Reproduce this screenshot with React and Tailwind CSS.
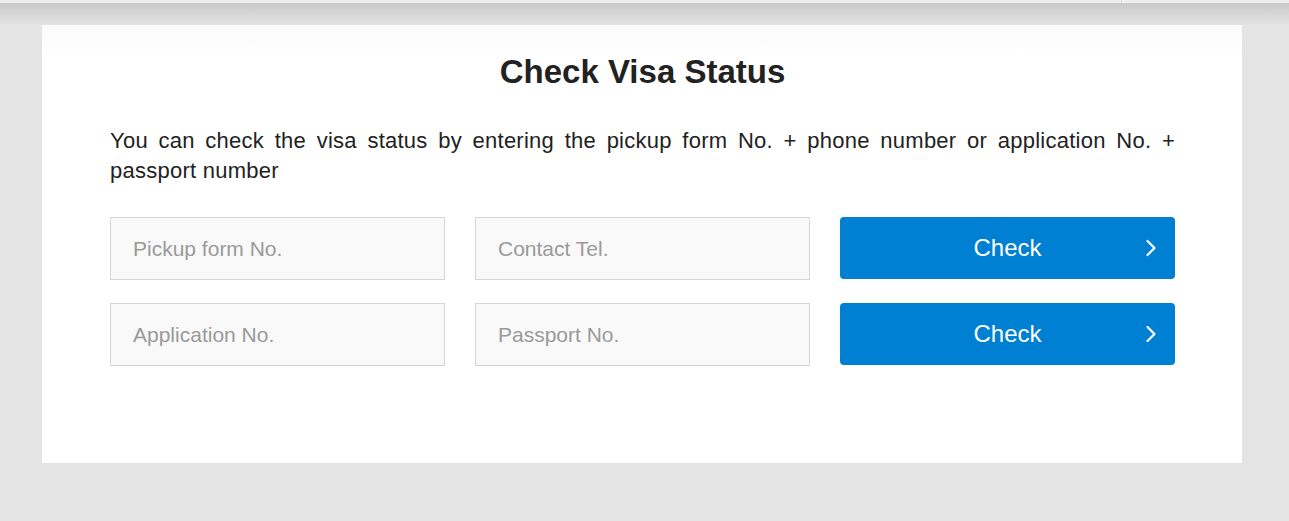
const Field = ({ placeholder }) => (
  <input
    type="text"
    placeholder={placeholder}
    className="h-[63px] w-full border border-[#d5d5d5] bg-[#f9f9f9] px-[22px] text-[21px] text-[#222] placeholder:text-[#9a9a9a] outline-none"
  />
);

const CheckButton = () => (
  <button className="relative flex h-[62px] w-full items-center justify-center rounded-[4px] bg-[#0080d2] text-[24px] text-white">
    Check
    <svg
      viewBox="0 0 12 18"
      className="absolute right-[18px] top-1/2 h-[18px] w-[12px] -translate-y-1/2"
      fill="none"
      stroke="currentColor"
      strokeWidth="2.2"
      strokeLinecap="round"
      strokeLinejoin="round"
    >
      <path d="M2.5 2 L9.5 9 L2.5 16" />
    </svg>
  </button>
);

export default function App() {
  return (
    <div className="min-h-[521px] bg-[#e4e4e4] font-['Liberation_Sans',Arial,sans-serif] text-[#222]">
      {/* top strip */}
      <div className="flex h-[3px] bg-[#efefef]">
        <div className="w-[1122px] border-r border-[#dcdcdc]" />
      </div>
      <div className="bg-[linear-gradient(#c9c9c9,#e4e4e4_22px)] pt-[22px]">
        <div className="ml-[42px] w-[1200px] bg-[linear-gradient(#fbfbfb,#ffffff_30px)] pl-[68px] pr-[67px] pb-[97px] pt-[27px]">
          <h1 className="text-center text-[33px] font-bold leading-[40px]">Check Visa Status</h1>
          <p className="mt-[34px] text-justify text-[22px] leading-[30px] tracking-[0.25px]">
            You can check the visa status by entering the pickup form No. + phone number or application No. + passport number
          </p>
          <div className="mt-[31px] grid grid-cols-3 gap-x-[30px] gap-y-[23px]">
            <Field placeholder="Pickup form No." />
            <Field placeholder="Contact Tel." />
            <CheckButton />
            <Field placeholder="Application No." />
            <Field placeholder="Passport No." />
            <CheckButton />
          </div>
        </div>
      </div>
    </div>
  );
}
